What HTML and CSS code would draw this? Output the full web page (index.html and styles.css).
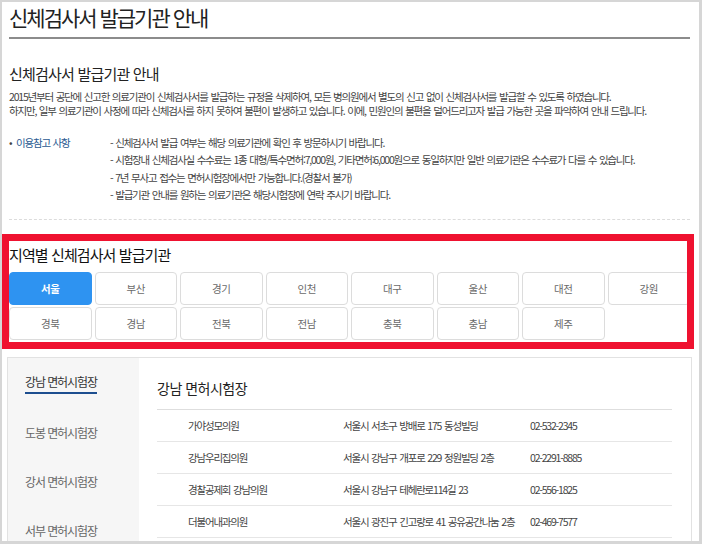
FILE: index.html
```html
<!DOCTYPE html>
<html lang="ko">
<head>
    <meta charset="UTF-8">
    <title>신체검사서 발급기관 안내</title>
    <link rel="stylesheet" href="styles.css">
</head>
<body>
    <div class="frame">
        <h1 class="page-title">신체검사서 발급기관 안내</h1>

        <section class="intro">
            <h2 class="intro-title">신체검사서 발급기관 안내</h2>
            <p class="intro-text">
                2015년부터 공단에 신고한 의료기관이 신체검사서를 발급하는 규정을 삭제하여, 모든 병의원에서 별도의 신고 없이 신체검사서를 발급할 수 있도록 하였습니다.<br>
                하지만, 일부 의료기관이 사정에 따라 신체검사를 하지 못하여 불편이 발생하고 있습니다. 이에, 민원인의 불편을 덜어드리고자 발급 가능한 곳을 파악하여 안내 드립니다.
            </p>
            <div class="notes">
                <div class="notes-label">이용참고 사항</div>
                <ul class="notes-list">
                    <li>- 신체검사서 발급 여부는 해당 의료기관에 확인 후 방문하시기 바랍니다.</li>
                    <li>- 시험장내 신체검사실 수수료는 1종 대형/특수면허:7,000원, 기타면허:6,000원으로 동일하지만 일반 의료기관은 수수료가 다를 수 있습니다.</li>
                    <li>- 7년 무사고 접수는 면허시험장에서만 가능합니다.(경찰서 불가)</li>
                    <li>- 발급기관 안내를 원하는 의료기관은 해당시험장에 연락 주시기 바랍니다.</li>
                </ul>
            </div>
        </section>

        <section class="region">
            <h3 class="region-title">지역별 신체검사서 발급기관</h3>
            <div class="region-grid">
                <button class="region-btn is-active">서울</button>
                <button class="region-btn">부산</button>
                <button class="region-btn">경기</button>
                <button class="region-btn">인천</button>
                <button class="region-btn">대구</button>
                <button class="region-btn">울산</button>
                <button class="region-btn">대전</button>
                <button class="region-btn">강원</button>
                <button class="region-btn">경북</button>
                <button class="region-btn">경남</button>
                <button class="region-btn">전북</button>
                <button class="region-btn">전남</button>
                <button class="region-btn">충북</button>
                <button class="region-btn">충남</button>
                <button class="region-btn">제주</button>
            </div>
            <div class="highlight"></div>
        </section>

        <section class="center">
            <ul class="center-nav">
                <li class="is-active"><span>강남 면허시험장</span></li>
                <li><span>도봉 면허시험장</span></li>
                <li><span>강서 면허시험장</span></li>
                <li><span>서부 면허시험장</span></li>
            </ul>
            <div class="center-body">
                <h4 class="center-title">강남 면허시험장</h4>
                <table class="clinic-table">
                    <colgroup>
                        <col class="col-name">
                        <col class="col-addr">
                        <col>
                    </colgroup>
                    <tr>
                        <td>가야성모의원</td>
                        <td>서울시 서초구 방배로 175 동성빌딩</td>
                        <td>02-532-2345</td>
                    </tr>
                    <tr>
                        <td>강남우리집의원</td>
                        <td>서울시 강남구 개포로 229 정원빌딩 2층</td>
                        <td>02-2291-8885</td>
                    </tr>
                    <tr>
                        <td>경찰공제회 강남의원</td>
                        <td>서울시 강남구 테헤란로114길 23</td>
                        <td>02-556-1825</td>
                    </tr>
                    <tr>
                        <td>더불어내과의원</td>
                        <td>서울시 광진구 긴고랑로 41 공유공간나눔 2층</td>
                        <td>02-469-7577</td>
                    </tr>
                </table>
            </div>
        </section>
    </div>
</body>
</html>
```

FILE: styles.css
```css
body {
    margin: 0;
    background: #fff;
    font-family: "Noto Sans CJK KR", "Liberation Sans", sans-serif;
    color: #444;
}

.frame {
    box-sizing: border-box;
    width: 702px;
    height: 544px;
    overflow: hidden;
    border: 2px solid #d6d6d6;
    border-right-width: 3px;
    border-bottom-width: 3px;
    padding: 0 9px 0 7px;
}

.page-title {
    margin: 0;
    padding-bottom: 5px;
    border-bottom: 2px solid #8c8c8c;
    font-size: 21px;
    font-weight: 400;
    line-height: 30px;
    letter-spacing: -2px;
    color: #222;
}

.intro-title {
    margin: 23px 0 0;
    font-size: 15px;
    font-weight: 400;
    line-height: 24px;
    letter-spacing: -0.8px;
    color: #222;
}

.intro-text {
    margin: 4px 0 0;
    font-size: 10.5px;
    line-height: 14px;
    letter-spacing: -1.2px;
    word-spacing: 1px;
    color: #444;
}

.notes {
    display: flex;
    margin-top: 16px;
    padding-bottom: 16px;
    border-bottom: 1px dashed #dcdcdc;
    font-size: 10.5px;
    line-height: 17.3px;
    letter-spacing: -1.2px;
    word-spacing: 1px;
}
.notes-label {
    width: 101px;
    flex: none;
    color: #2b5a91;
}
.notes-label::before {
    content: "•";
    display: inline-block;
    width: 7px;
    color: #444;
}
.notes-list {
    margin: 0;
    padding: 0;
    list-style: none;
}

.region {
    position: relative;
    padding-top: 24px;
}
.region-title {
    margin: 0;
    font-size: 15px;
    font-weight: 400;
    line-height: 22px;
    letter-spacing: -0.9px;
    color: #111;
}
.region-grid {
    display: grid;
    grid-template-columns: repeat(8, 1fr);
    gap: 2px 3px;
    margin-top: 6px;
}
.region-btn {
    height: 33px;
    padding: 0;
    border: 1px solid #dcdcdc;
    border-radius: 4px;
    background: #fff;
    font-family: inherit;
    font-size: 10.5px;
    letter-spacing: -0.5px;
    color: #6a6a6a;
}
.region-btn.is-active {
    background: #2e93f1;
    border-color: #2e93f1;
    color: #fff;
    font-weight: 700;
}
.highlight {
    position: absolute;
    left: -7px;
    top: 14px;
    box-sizing: border-box;
    width: 692px;
    height: 115px;
    border: 7px solid #ef1230;
    pointer-events: none;
}

.center {
    display: flex;
    margin: 17px -2px 0;
    border: 1px solid #e2e2e2;
}
.center-nav {
    box-sizing: border-box;
    width: 131px;
    flex: none;
    margin: 0;
    padding: 14px 0 0 17px;
    list-style: none;
    background: #f6f6f6;
    font-size: 12px;
    letter-spacing: -1.1px;
    color: #666;
}
.center-nav li {
    line-height: 20px;
    margin-bottom: 29px;
}
.center-nav span {
    display: inline-block;
}
.center-nav .is-active span {
    color: #333;
    border-bottom: 2px solid #1d4e8f;
}

.center-body {
    flex: 1;
    padding: 19px 19px 0 18px;
}
.center-title {
    margin: 0;
    font-size: 14px;
    font-weight: 400;
    line-height: 22px;
    letter-spacing: -0.5px;
    color: #222;
}
.clinic-table {
    width: 100%;
    margin-top: 10px;
    border-collapse: collapse;
    border-top: 1px solid #dedede;
    font-size: 10.5px;
    letter-spacing: -1.2px;
    word-spacing: 1px;
    color: #444;
}
.col-name {
    width: 186px;
}
.col-addr {
    width: 187px;
}
.clinic-table td {
    height: 31px;
    padding: 0;
    border-bottom: 1px solid #e6e6e6;
    white-space: nowrap;
}
.clinic-table td:first-child {
    padding-left: 31px;
}
```
